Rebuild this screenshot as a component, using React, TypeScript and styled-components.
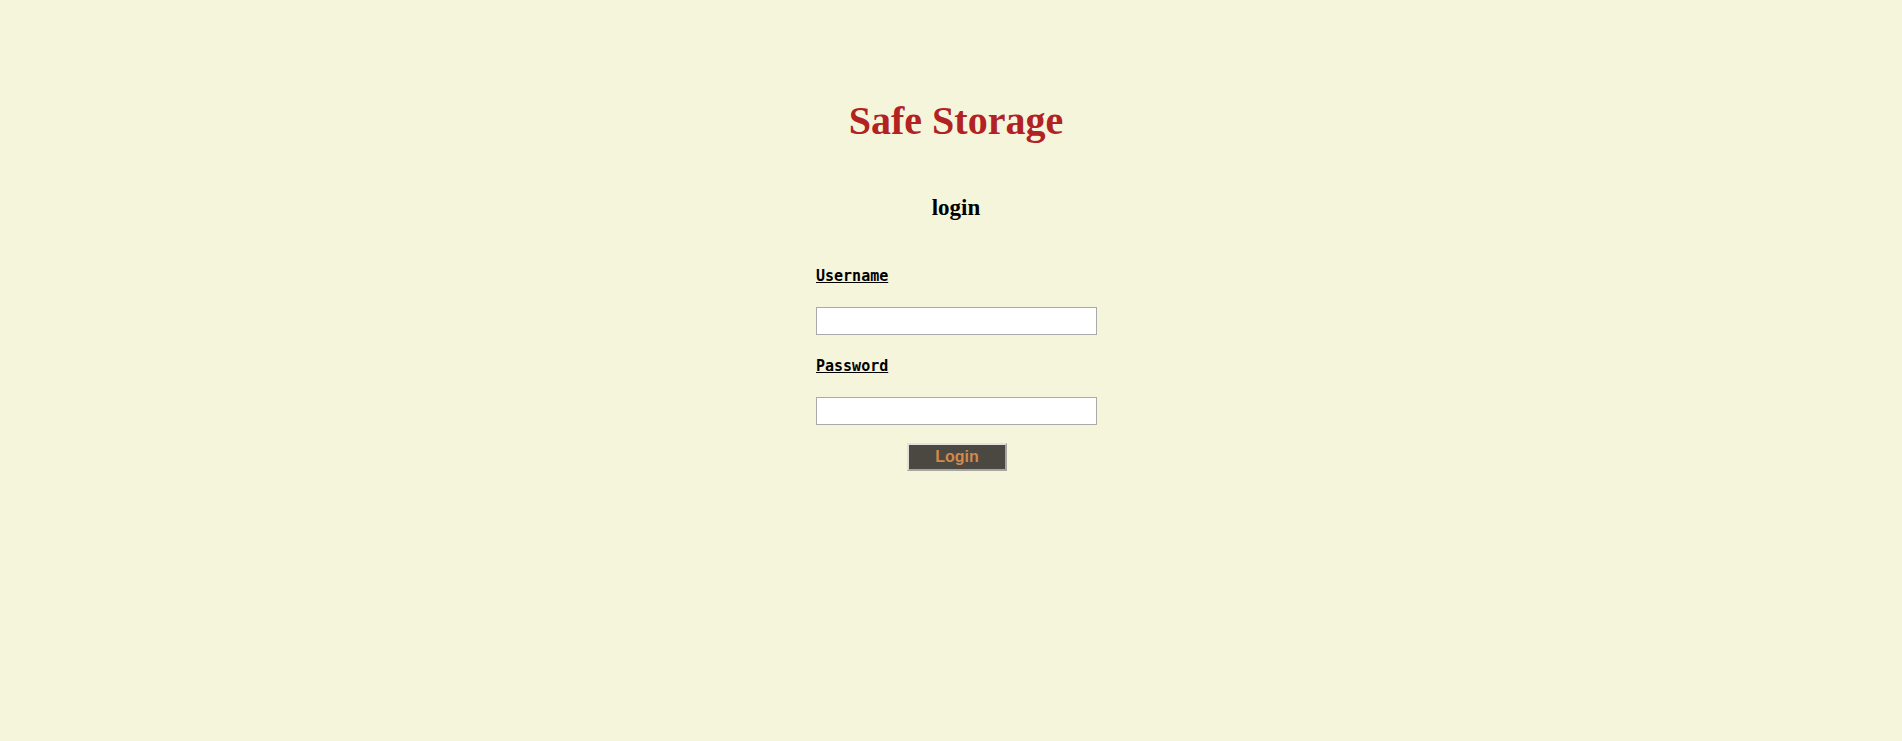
import styled, { createGlobalStyle } from "styled-components";

const GlobalStyle = createGlobalStyle`
  html, body {
    margin: 0;
    padding: 0;
    background: #f5f5dc;
  }
  body {
    font-family: "Liberation Serif", "Times New Roman", serif;
  }
`;

const Page = styled.div`
  min-height: 741px;
  padding: 98px 0 0 10px;
  box-sizing: border-box;
  display: flex;
  flex-direction: column;
  align-items: center;
`;

const Title = styled.h1`
  margin: 0;
  font-family: "Liberation Serif", "Times New Roman", serif;
  font-size: 40px;
  line-height: 46px;
  font-weight: bold;
  color: #b22222;
`;

const Subtitle = styled.h2`
  margin: 51px 0 0;
  font-family: "Liberation Serif", "Times New Roman", serif;
  font-size: 23px;
  line-height: 26px;
  font-weight: bold;
  color: #000;
`;

const Form = styled.form`
  width: 282px;
  margin: 46px 0 0 2px;
  display: flex;
  flex-direction: column;
`;

const Label = styled.label<{ $gap?: number }>`
  margin-top: ${(p) => p.$gap ?? 0}px;
  font-family: "DejaVu Sans Mono", "Liberation Mono", monospace;
  font-size: 15px;
  line-height: 18px;
  font-weight: bold;
  color: #000;
  text-decoration: underline;
`;

const Input = styled.input`
  margin-top: 22px;
  width: 281px;
  height: 28px;
  box-sizing: border-box;
  border: 1px solid #aaaaaa;
  background: #fff;
  padding: 2px 4px;
  outline: none;
`;

const Button = styled.button`
  align-self: center;
  margin-top: 18px;
  width: 100px;
  height: 28px;
  box-sizing: border-box;
  border: 2px solid;
  border-color: #e2e2da #a6a69e #a6a69e #e2e2da;
  background: #4a4840;
  color: #d4894c;
  font-family: "Liberation Sans", Arial, sans-serif;
  font-size: 16px;
  font-weight: bold;
  padding: 0;
  cursor: pointer;
`;

export default function App() {
  return (
    <>
      <GlobalStyle />
      <Page>
        <Title>Safe Storage</Title>
        <Subtitle>login</Subtitle>
        <Form onSubmit={(e) => e.preventDefault()}>
          <Label htmlFor="username">Username</Label>
          <Input id="username" type="text" />
          <Label htmlFor="password" $gap={22}>Password</Label>
          <Input id="password" type="password" />
          <Button type="submit">Login</Button>
        </Form>
      </Page>
    </>
  );
}
